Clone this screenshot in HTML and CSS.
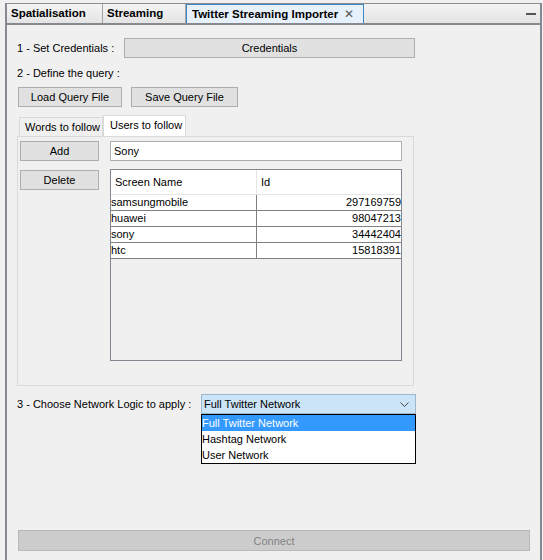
FILE: index.html
```html
<!DOCTYPE html>
<html lang="en">
<head>
    <meta charset="UTF-8">
    <title>Twitter Streaming Importer</title>
    <link rel="stylesheet" href="styles.css">
</head>
<body>
    <div class="frame">
        <div class="tabbar">
            <div class="tab">Spatialisation</div>
            <div class="tab">Streaming</div>
            <div class="tab active">Twitter Streaming Importer <span class="close">&#x2715;</span></div>
            <div class="tabbar-fill"><span class="minimize"></span></div>
        </div>

        <div class="content">
            <div class="row row-cred">
                <span class="label">1 - Set Credentials :</span>
                <button class="btn btn-cred">Credentials</button>
            </div>
            <div class="row row-query">
                <span class="label">2 - Define the query :</span>
            </div>
            <div class="row row-files">
                <button class="btn btn-file">Load Query File</button>
                <button class="btn btn-file">Save Query File</button>
            </div>

            <div class="subtabs">
                <div class="subtab">Words to follow</div>
                <div class="subtab active">Users to follow</div>
            </div>
            <div class="subpanel">
                <div class="side">
                    <button class="btn btn-side">Add</button>
                    <button class="btn btn-side">Delete</button>
                </div>
                <div class="main">
                    <div class="textfield">Sony</div>
                    <div class="table">
                        <div class="thead">
                            <div class="th th-name">Screen Name</div>
                            <div class="th th-id">Id</div>
                        </div>
                        <div class="tr"><div class="td td-name">samsungmobile</div><div class="td td-id">297169759</div></div>
                        <div class="tr"><div class="td td-name">huawei</div><div class="td td-id">98047213</div></div>
                        <div class="tr"><div class="td td-name">sony</div><div class="td td-id">34442404</div></div>
                        <div class="tr"><div class="td td-name">htc</div><div class="td td-id">15818391</div></div>
                    </div>
                </div>
            </div>

            <div class="row row-logic">
                <span class="label">3 - Choose Network Logic to apply :</span>
                <div class="combo">
                    <div class="combo-box">
                        <span>Full Twitter Network</span>
                        <svg class="chevron" width="9" height="6" viewBox="0 0 9 6"><path d="M0.5 0.5 L4.5 4.5 L8.5 0.5" fill="none" stroke="#444" stroke-width="1"/></svg>
                    </div>
                    <div class="combo-list">
                        <div class="opt selected">Full Twitter Network</div>
                        <div class="opt">Hashtag Network</div>
                        <div class="opt">User Network</div>
                    </div>
                </div>
            </div>

            <button class="btn btn-connect" disabled>Connect</button>
        </div>
    </div>
</body>
</html>
```

FILE: styles.css
```css
html, body {
    margin: 0;
    height: 100%;
}
body {
    background: #f0f0f0;
    font-family: "Liberation Sans", Arial, sans-serif;
    font-size: 11px;
    color: #000;
    white-space: nowrap;
}
.frame {
    box-sizing: border-box;
    height: 557px;
    margin: 3px 1px 0 5px;
    border-top: 1px solid #8a8c90;
    border-left: 2px solid #868991;
    border-right: 2px solid #868991;
    display: flex;
    flex-direction: column;
}
.tabbar {
    display: flex;
    height: 19px;
    border-bottom: 2px solid #878a91;
    background: linear-gradient(#f4f4f4, #e4e4e4);
}
.tab {
    box-sizing: border-box;
    padding: 0 0 0 4px;
    line-height: 19px;
    font-weight: bold;
    font-size: 11.5px;
    border-right: 1px solid #a3a3a3;
}
.tab:first-child { width: 96px; }
.tab:nth-child(2) { width: 83px; }
.tab.active {
    background: #e7f1fc;
    border: 1px solid #3e86c4;
    border-bottom: none;
    line-height: 18px;
    width: 178px;
    padding-left: 5px;
}
.close {
    font-weight: normal;
    font-size: 12px;
    color: #555;
    margin-left: 3px;
}
.tabbar-fill {
    flex: 1;
    display: flex;
    justify-content: flex-end;
    align-items: center;
    padding-right: 4px;
}
.minimize {
    width: 10px;
    height: 2px;
    background: #555;
}
.content {
    flex: 1;
    display: flex;
    flex-direction: column;
    padding: 13px 0 9px 10px;
}
.row {
    display: flex;
    align-items: center;
}
.btn {
    font-family: inherit;
    font-size: 11px;
    color: #000;
    background: #e1e1e1;
    border: 1px solid #adadad;
    box-sizing: border-box;
    height: 20px;
    padding: 0;
    margin: 0;
}
.row-cred .label { width: 107px; }
.btn-cred { width: 291px; }
.row-query { margin-top: 7px; height: 15px; }
.row-files { margin-top: 7px; gap: 9px; padding-left: 1px; }
.btn-file { width: 104px; }
.btn-file + .btn-file { width: 107px; }

.subtabs {
    display: flex;
    margin-top: 8px;
    padding-left: 2px;
    height: 21px;
    align-items: flex-end;
}
.subtab {
    box-sizing: border-box;
    height: 19px;
    line-height: 18px;
    padding: 0 0 0 5px;
    width: 84px;
    border: 1px solid #d9d9d9;
    border-bottom: none;
    background: #f0f0f0;
}
.subtab.active {
    height: 21px;
    background: #fff;
    width: 83px;
    padding-left: 6px;
}
.subpanel {
    box-sizing: border-box;
    width: 397px;
    height: 250px;
    border: 1px solid #d9d9d9;
    display: flex;
    padding: 4px 0 0 2px;
}
.side {
    display: flex;
    flex-direction: column;
    gap: 9px;
    width: 90px;
}
.btn-side { width: 79px; }
.main { width: 292px; }
.textfield {
    box-sizing: border-box;
    height: 20px;
    background: #fff;
    border: 1px solid #abadb3;
    padding-left: 3px;
    line-height: 18px;
}
.table {
    box-sizing: border-box;
    margin-top: 8px;
    height: 192px;
    border: 1px solid #828790;
}
.thead {
    display: flex;
    height: 24px;
    background: #fff;
    border-bottom: 1px solid #e5e5e5;
}
.th {
    line-height: 24px;
    padding-left: 4px;
}
.th-name { width: 141px; border-right: 1px solid #e5e5e5; }
.th-id { flex: 1; }
.tr {
    display: flex;
    height: 16px;
    background: #fff;
    border-bottom: 1px solid #808080;
    box-sizing: border-box;
}
.td { line-height: 15px; }
.td-name { width: 145px; border-right: 1px solid #808080; }
.td-id { flex: 1; text-align: right; }

.row-logic {
    margin-top: 8px;
}
.row-logic .label { width: 184px; }
.combo {
    position: relative;
    width: 215px;
}
.combo-box {
    box-sizing: border-box;
    height: 20px;
    background: #cce4f7;
    border: 1px solid #9cb6cc;
    display: flex;
    align-items: center;
    justify-content: space-between;
    padding: 0 6px 0 2px;
}
.chevron { margin-top: 2px; }
.combo-list {
    position: absolute;
    top: 20px;
    left: 0;
    right: 0;
    background: #fff;
    border: 1px solid #000;
}
.opt {
    height: 16px;
    line-height: 16px;
}
.opt.selected {
    background: #3399ff;
    color: #fff;
}
.btn-connect {
    margin-top: auto;
    margin-left: 1px;
    width: 512px;
    height: 21px;
    background: #cccccc;
    border-color: #b9b9b9;
    color: #838383;
}
```
